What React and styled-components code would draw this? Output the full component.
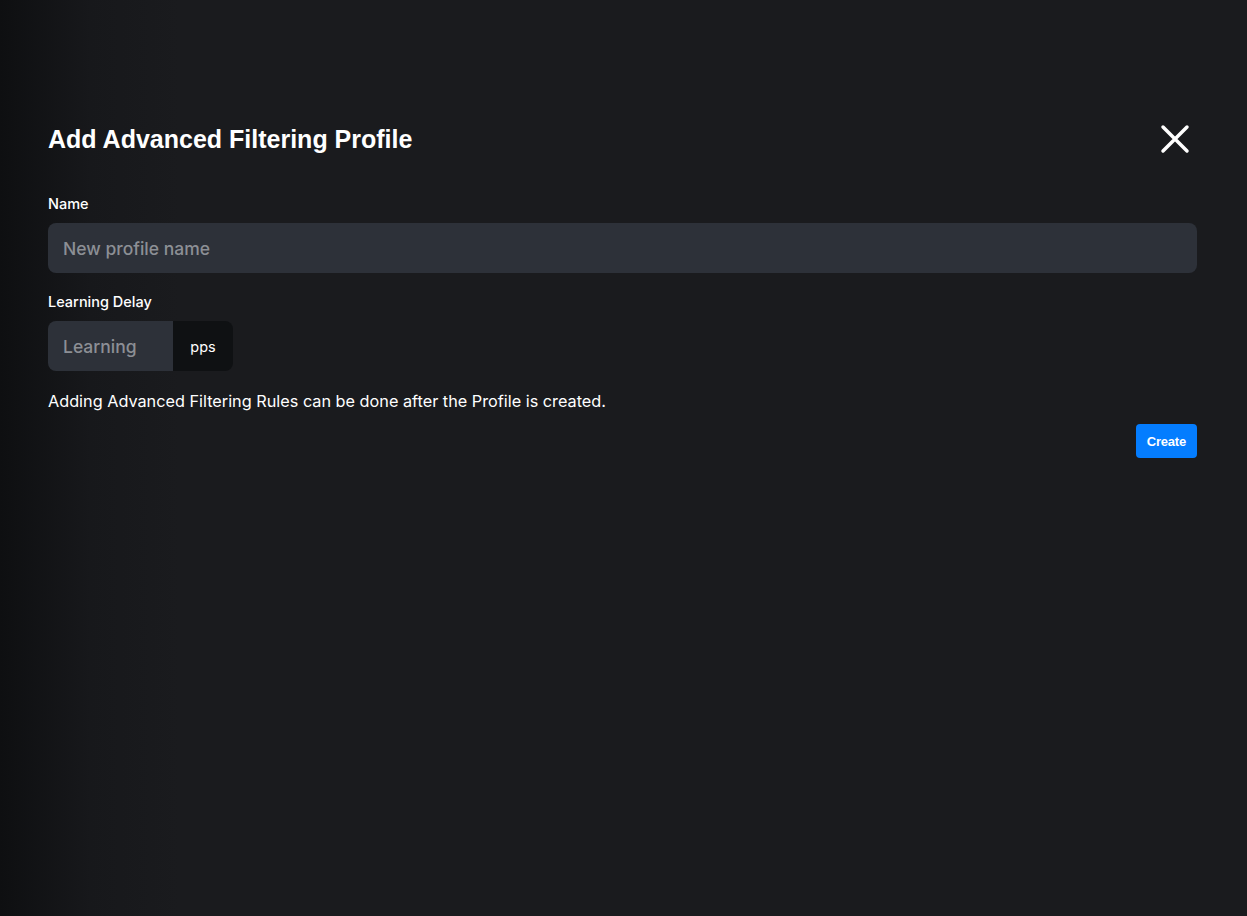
import React from 'react';
import styled, { createGlobalStyle } from 'styled-components';

const GlobalStyle = createGlobalStyle`
  html, body {
    margin: 0;
    padding: 0;
    height: 100%;
  }
  body {
    background: linear-gradient(to right, #0e0f11 0px, #17181b 90px, #1a1b1e 180px, #1a1b1e 100%);
    font-family: Inter, "Noto Sans", sans-serif;
    color: #ffffff;
  }
`;

const Page = styled.div`
  min-height: 916px;
  box-sizing: border-box;
  padding: 120px 50px 0 48px;
`;

const Header = styled.div`
  display: flex;
  align-items: center;
  justify-content: space-between;
  height: 38px;
  margin-bottom: 37px;
`;

const Title = styled.h2`
  margin: 0;
  font-family: "Liberation Sans", Arial, sans-serif;
  font-size: 25px;
  font-weight: 700;
  letter-spacing: 0;
  color: #ffffff;
`;

const CloseButton = styled.button`
  display: flex;
  align-items: center;
  justify-content: center;
  width: 36px;
  height: 36px;
  margin-right: 4px;
  padding: 0;
  border: none;
  background: transparent;
  cursor: pointer;
`;

const Field = styled.div`
  display: flex;
  flex-direction: column;
  gap: 10px;
  margin-bottom: ${({ spacing }) => spacing || '20px'};
`;

const Label = styled.label`
  font-size: 14.5px;
  font-weight: 500;
  color: #ffffff;
  line-height: 18px;
`;

const TextInput = styled.input`
  box-sizing: border-box;
  height: 50px;
  width: ${({ width }) => width || '100%'};
  padding: 0 15px;
  border: none;
  border-radius: ${({ joined }) => (joined ? '8px 0 0 8px' : '8px')};
  background: #2d3139;
  color: #ffffff;
  font-family: Inter, sans-serif;
  font-size: 17.5px;
  font-weight: 500;
  outline: none;

  &::placeholder {
    color: #8c8f95;
  }
`;

const InputGroup = styled.div`
  display: flex;
  align-items: stretch;
`;

const Addon = styled.span`
  display: flex;
  align-items: center;
  justify-content: center;
  width: 60px;
  height: 50px;
  border-radius: 0 8px 8px 0;
  background: #0f1113;
  font-size: 14.5px;
  font-weight: 400;
  color: #ffffff;
`;

const Note = styled.p`
  margin: 0 0 12px;
  font-size: 16.25px;
  line-height: 22px;
  color: #ffffff;
`;

const Footer = styled.div`
  display: flex;
  justify-content: flex-end;
`;

const PrimaryButton = styled.button`
  height: 34px;
  padding: 0 11px;
  border: none;
  border-radius: 4px;
  background: #047dff;
  color: #ffffff;
  font-family: "Liberation Sans", Arial, sans-serif;
  font-size: 13px;
  font-weight: 700;
  letter-spacing: -0.2px;
  cursor: pointer;
`;

const CloseIcon = () => (
  <svg width="30" height="30" viewBox="0 0 30 30" fill="none">
    <path d="M3 3L27 27M27 3L3 27" stroke="#ffffff" strokeWidth="3.5" strokeLinecap="round" />
  </svg>
);

export default function App() {
  return (
    <>
      <GlobalStyle />
      <Page>
        <Header>
          <Title>Add Advanced Filtering Profile</Title>
          <CloseButton aria-label="Close">
            <CloseIcon />
          </CloseButton>
        </Header>

        <Field>
          <Label>Name</Label>
          <TextInput placeholder="New profile name" />
        </Field>

        <Field spacing="19px">
          <Label>Learning Delay</Label>
          <InputGroup>
            <TextInput joined width="125px" placeholder="Learning" />
            <Addon>pps</Addon>
          </InputGroup>
        </Field>

        <Note>Adding Advanced Filtering Rules can be done after the Profile is created.</Note>

        <Footer>
          <PrimaryButton>Create</PrimaryButton>
        </Footer>
      </Page>
    </>
  );
}
